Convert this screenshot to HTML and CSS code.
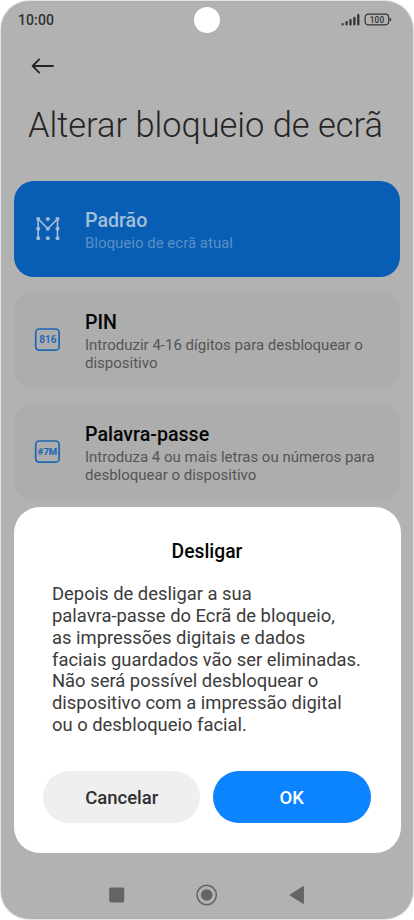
FILE: index.html
```html
<!DOCTYPE html>
<html lang="pt">
<head>
<meta charset="utf-8">
<title>Alterar bloqueio de ecrã</title>
<link rel="stylesheet" href="styles.css">
</head>
<body>
<div class="phone">
  <header class="status">
    <span class="time">10:00</span>
    <span class="camera"></span>
    <svg class="indicators" width="52" height="14" viewBox="0 0 52 14">
      <g stroke="#303030" stroke-width="2.2" stroke-linecap="round">
        <path d="M2.6 11.4v-.3M6.6 11.4V9.2M10.5 11.4V7.1M14.4 11.4V4.9M18.3 11.4V2.2"/>
      </g>
      <rect x="25.1" y="1.2" width="23.6" height="10.6" rx="3.2" fill="none" stroke="#343434" stroke-width="1.2"/>
      <path d="M49.8 4.7q1.5.4 1.5 1.8t-1.5 1.8z" fill="#343434"/>
      <text x="37" y="9.5" text-anchor="middle" class="battery">100</text>
    </svg>
  </header>
  <div class="toolbar">
    <svg width="24" height="18" viewBox="0 0 24 18" fill="none" stroke="#242424" stroke-width="1.8" stroke-linecap="round" stroke-linejoin="round">
      <path d="M22 9H1.6M8.2 2.4 1.6 9 8.2 15.6"/>
    </svg>
  </div>
  <h1 class="title">Alterar bloqueio de ecrã</h1>
  <main class="options">
    <section class="card selected">
      <svg class="icon" width="26" height="26" viewBox="0 0 26 26">
        <path d="M4.2 22.3V3L13.8 12.7 23.5 3v19.3" fill="none" stroke="#a9bccf" stroke-width="1.6"/>
        <g fill="#a9bccf"><circle cx="4.2" cy="3" r="2"/><circle cx="13.8" cy="3" r="2"/><circle cx="23.5" cy="3" r="2"/><circle cx="4.2" cy="12.7" r="2"/><circle cx="13.8" cy="12.7" r="2"/><circle cx="23.5" cy="12.7" r="2"/><circle cx="4.2" cy="22.3" r="2"/><circle cx="13.8" cy="22.3" r="2"/><circle cx="23.5" cy="22.3" r="2"/></g>
      </svg>
      <div><h2>Padrão</h2><p>Bloqueio de ecrã atual</p></div>
    </section>
    <section class="card">
      <svg class="icon" width="26" height="26" viewBox="0 0 26 26">
        <rect x="1.7" y="2" width="23.4" height="21.2" rx="3.5" fill="none" stroke="#1c66b2" stroke-width="1.7"/>
        <text x="13.8" y="16.2" text-anchor="middle" class="key">816</text>
      </svg>
      <div><h2>PIN</h2><p>Introduzir 4-16 dígitos para desbloquear o<br>dispositivo</p></div>
    </section>
    <section class="card">
      <svg class="icon" width="26" height="26" viewBox="0 0 26 26">
        <rect x="1.7" y="2" width="23.4" height="21.2" rx="3.5" fill="none" stroke="#1c66b2" stroke-width="1.7"/>
        <text x="13.5" y="16" text-anchor="middle" class="key wide">#7M</text>
      </svg>
      <div><h2>Palavra-passe</h2><p>Introduza 4 ou mais letras ou números para<br>desbloquear o dispositivo</p></div>
    </section>
  </main>
  <nav class="navbar">
    <svg width="16" height="16" viewBox="0 0 16 16"><rect x=".2" y=".5" width="15" height="15" rx="1.8" fill="#646464"/></svg>
    <svg width="22" height="22" viewBox="0 0 22 22"><circle cx="10.7" cy="11" r="9.7" fill="none" stroke="#646464" stroke-width="1.5"/><circle cx="10.7" cy="11" r="5.8" fill="#646464"/></svg>
    <svg width="16" height="20" viewBox="0 0 16 20"><path d="M14.3 1.8v16.4L1.3 10z" fill="#646464" stroke="#646464" stroke-width="1.2" stroke-linejoin="round"/></svg>
  </nav>
  <div class="dialog" role="dialog">
    <h3>Desligar</h3>
    <p>Depois de desligar a sua<br>palavra-passe do Ecrã de bloqueio,<br>as impressões digitais e dados<br>faciais guardados vão ser eliminadas.<br>Não será possível desbloquear o<br>dispositivo com a impressão digital<br>ou o desbloqueio facial.</p>
    <div class="actions">
      <button class="cancel">Cancelar</button>
      <button class="ok">OK</button>
    </div>
  </div>
</div>
</body>
</html>
```
FILE: styles.css
```css
* { box-sizing: border-box; margin: 0; padding: 0; }
body { width: 414px; height: 920px; padding: 1px; background: #fff; font-family: Roboto, "Liberation Sans", sans-serif; overflow: hidden; }
.phone { position: relative; display: flex; flex-direction: column; width: 412px; height: 918px; border-radius: 28px; background: #b2b2b2; box-shadow: 0 0 0 1px #e3e6e5; }
.status { display: grid; grid-template-columns: 1fr 26px 1fr; align-items: center; height: 38px; padding: 0 21px; }
.time { font-size: 14px; font-weight: 500; color: #303030; letter-spacing: .1px; margin-left: -4px; }
.camera { width: 26px; height: 26px; border-radius: 50%; background: #fff; }
.indicators { justify-self: end; }
.battery { font-size: 8.2px; font-weight: 500; fill: #303030; letter-spacing: .2px; }
.toolbar { height: 54px; padding: 18px 30px 0; }
.toolbar svg { display: block; }
.title { height: 88px; padding: 12px 27px 0; font-size: 34.4px; line-height: 41px; font-weight: 300; color: #252525; white-space: nowrap; }
.options { display: flex; flex-direction: column; gap: 14px; padding: 0 13px; }
.card { display: flex; align-items: center; height: 98px; padding: 0 20px; border-radius: 20px; background: #adadad; }
.card.selected { height: 96px; background: #085eb4; }
.icon { flex: none; margin-right: 25px; }
.card h2 { padding-top: 1px; font-size: 19.6px; line-height: 26px; font-weight: 500; color: #050505; white-space: nowrap; }
.card p { font-size: 15px; line-height: 18px; color: #555; white-space: nowrap; }
.selected h2 { color: #a3bdd7; }
.selected p { color: #5c8fc4; }
.key { font-size: 10px; font-weight: 600; fill: #1c66b2; }
.wide { font-size: 9.5px; font-weight: 800; }
.navbar { display: flex; align-items: center; justify-content: center; gap: 71px; height: 46px; margin: auto 0 1px; }
.dialog { position: absolute; left: 12.5px; top: 506px; width: 387px; height: 346px; padding: 33px 30px 30px; border-radius: 26px; background: #fff; display: flex; flex-direction: column; }
.dialog h3 { font-size: 19.3px; line-height: 24px; font-weight: 500; text-align: center; color: #050505; }
.dialog p { margin: 19px 0 0 8.5px; font-size: 18.4px; line-height: 21.85px; color: #3b3b3b; white-space: nowrap; }
.actions { display: grid; grid-template-columns: 157px 158px; gap: 12.5px; margin: auto 0 0 -.3px; }
.actions button { height: 52px; border: 0; border-radius: 26px; padding-top: 1px; font-family: inherit; font-size: 18.5px; font-weight: 500; }
.cancel { background: #efefef; color: #303030; }
.ok { background: #0d84ff; color: #fff; }
```
